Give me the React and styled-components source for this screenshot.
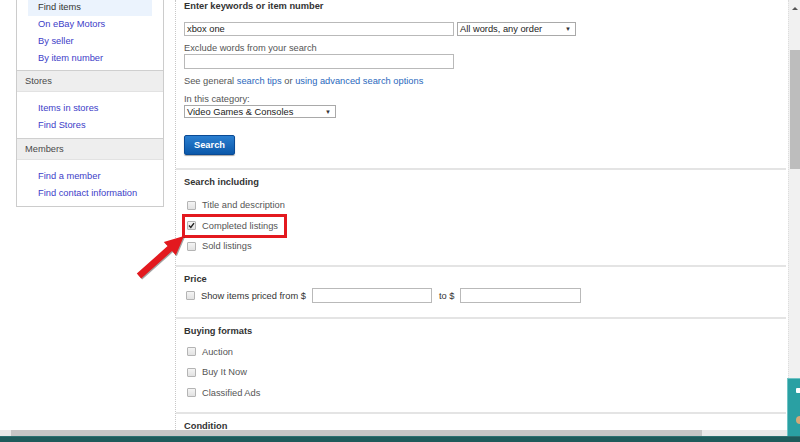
import React from "react";
import styled, { createGlobalStyle } from "styled-components";

const GlobalStyle = createGlobalStyle`
  html, body {
    margin: 0;
    padding: 0;
    background: #fff;
  }
  body {
    font-family: "Liberation Sans", Arial, sans-serif;
    font-size: 9.3px;
    color: #333;
  }
`;

const Screen = styled.div`
  position: relative;
  width: 800px;
  height: 442px;
  overflow: hidden;
  display: flex;
  flex-direction: column;
  background: #fff;
`;

const Viewport = styled.div`
  display: flex;
  height: 431px;
  overflow: hidden;
`;

const Page = styled.div`
  flex: 1;
  display: flex;
  align-items: stretch;
  padding: 0 2px 0 16px;
`;

/* ---------- sidebar ---------- */
const Sidebar = styled.nav`
  width: 146px;
  align-self: flex-start;
  margin-top: -1px;
  border: 1px solid #ccc;
  border-top: none;
`;

const NavList = styled.div`
  padding: ${({ first }) => (first ? "0 0 3px" : "8px 0 4px")};
`;

const NavItem = styled.a`
  display: block;
  height: 17px;
  line-height: 17px;
  margin: 0 11px;
  padding-left: 10px;
  color: ${({ active }) => (active ? "#333" : "#3d3dc8")};
  background: ${({ active }) => (active ? "#ebf3fd" : "transparent")};
  text-decoration: none;
`;

const NavHeader = styled.div`
  height: 20px;
  line-height: 20px;
  padding-left: 8px;
  background: #eeeeee;
  border-top: 1px solid #cfcfcf;
  border-bottom: 1px solid #e2e2e2;
  color: #4a4a4a;
`;

/* ---------- main column ---------- */
const Main = styled.main`
  flex: 1;
  margin-left: 11px;
  border-left: 1px dotted #c8c8c8;
`;

const Section = styled.section`
  padding: ${({ pad }) => pad || "5px 0 10px 8px"};
  border-top: ${({ first }) => (first ? "none" : "2px solid #e4e4e4")};
`;

const Title = styled.div`
  font-weight: bold;
  line-height: 14px;
  color: #333;
  margin-top: ${({ top }) => top || 0}px;
`;

const Label = styled.div`
  line-height: ${({ lh }) => lh || 12}px;
  margin-top: ${({ top }) => top || 0}px;
  color: #555;
`;

const Row = styled.div`
  display: flex;
  align-items: center;
  gap: ${({ gap }) => gap || 3}px;
  margin-top: ${({ top }) => top || 0}px;
`;

const PriceRow = styled(Row)`
  height: 16px;
  padding-left: 2px;

  span.to {
    margin-left: 1px;
  }
`;

const TextBox = styled.div`
  box-sizing: border-box;
  width: ${({ w }) => w}px;
  height: ${({ h }) => h || 15}px;
  line-height: ${({ h }) => (h || 15) - 2}px;
  padding-left: 2px;
  border: 1px solid #b9b9b9;
  background: #fff;
  color: #222;
`;

const Select = styled.div`
  box-sizing: border-box;
  width: ${({ w }) => w}px;
  height: ${({ h }) => h || 13}px;
  display: flex;
  align-items: center;
  justify-content: space-between;
  padding: 0 4px 0 2px;
  border: 1px solid #a9a9a9;
  background: #fff;
  color: #222;

  span.caret {
    font-size: 6px;
    color: #333;
  }
`;

const Link = styled.a`
  color: #2b68bd;
  text-decoration: none;
`;

const SearchButton = styled.button`
  display: block;
  width: 51px;
  height: 20px;
  margin-top: 17px;
  padding: 0;
  border: 1px solid #0a4a94;
  border-radius: 2px;
  background: linear-gradient(#2b7fd0, #0b58aa);
  box-shadow: 0 1px 1px rgba(0, 0, 0, 0.35);
  color: #fff;
  font-family: inherit;
  font-size: 9.3px;
  font-weight: bold;
`;

const CheckList = styled.div`
  margin-top: ${({ top }) => top || 0}px;
`;

const CheckRow = styled.div`
  display: flex;
  align-items: center;
  gap: 6px;
  height: 20.5px;
  padding-left: 3px;
  width: ${({ highlighted }) => (highlighted ? "fit-content" : "auto")};
  padding-right: ${({ highlighted }) => (highlighted ? "7px" : "0")};
  outline: ${({ highlighted }) => (highlighted ? "3px solid #e3191f" : "none")};
  outline-offset: -1px;
  color: #555;
`;

const Box = styled.span`
  box-sizing: border-box;
  width: 9px;
  height: 9px;
  border: 1px solid #b4b4b4;
  border-radius: 1px;
  background: linear-gradient(#f4f4f4, #e2e2e2);
  display: inline-flex;
  align-items: center;
  justify-content: center;
`;

/* ---------- chrome ---------- */
const VScroll = styled.div`
  width: 12px;
  position: relative;
  background: #f1f1f1;
  border-left: 1px dotted #dcdcdc;
  box-sizing: border-box;
  padding-top: 50px;

  &::before {
    content: "";
    position: absolute;
    top: 4px;
    left: 3px;
    border: 3px solid transparent;
    border-bottom: 3px solid #555;
  }
`;

const Thumb = styled.div`
  margin-left: 1px;
  width: 10px;
  height: 119px;
  background: #bdbdbd;
`;

const HScroll = styled.div`
  height: 6px;
  display: flex;
  background: #e9e9e9;
  padding-left: 11px;

  div {
    width: 691px;
    background: #c6c6c6;
  }
`;

const Taskbar = styled.div`
  height: 5px;
  background: #1e5b5b;
  border-top: 1px solid #2c7070;
`;

const Tray = styled.div`
  position: absolute;
  left: 787px;
  top: 378px;
  width: 13px;
  height: 58px;
  background: #2aa0a3;
  border-left: 1px solid #6fc3c4;
  border-top: 1px solid #6fc3c4;
  box-sizing: border-box;
`;

const Arrow = styled.svg`
  position: absolute;
  left: 130px;
  top: 225px;
  overflow: visible;
`;

const Check = ({ checked }) => (
  <Box>
    {checked && (
      <svg width="7" height="7" viewBox="0 0 7 7">
        <path d="M1 3.6 L2.8 5.4 L6 1.2" fill="none" stroke="#222" strokeWidth="1.4" />
      </svg>
    )}
  </Box>
);

const Caret = () => <span className="caret">▼</span>;

export default function App() {
  return (
    <Screen>
      <GlobalStyle />
      <Viewport>
        <Page>
          <Sidebar>
            <NavList first>
              <NavItem active>Find items</NavItem>
              <NavItem>On eBay Motors</NavItem>
              <NavItem>By seller</NavItem>
              <NavItem>By item number</NavItem>
            </NavList>
            <NavHeader>Stores</NavHeader>
            <NavList>
              <NavItem>Items in stores</NavItem>
              <NavItem>Find Stores</NavItem>
            </NavList>
            <NavHeader>Members</NavHeader>
            <NavList>
              <NavItem>Find a member</NavItem>
              <NavItem>Find contact information</NavItem>
            </NavList>
          </Sidebar>

          <Main>
            <Section first pad="0 0 13px 8px">
              <Title top={-1}>Enter keywords or item number</Title>
              <Row top={9}>
                <TextBox w={270} h={14}>xbox one</TextBox>
                <Select w={119} h={14}>
                  All words, any order <Caret />
                </Select>
              </Row>
              <Label top={6}>Exclude words from your search</Label>
              <TextBox w={270} />
              <Label top={5} lh={14}>
                See general <Link>search tips</Link> or <Link>using advanced search options</Link>
              </Label>
              <Label top={5}>In this category:</Label>
              <Select w={152}>
                Video Games &amp; Consoles <Caret />
              </Select>
              <SearchButton>Search</SearchButton>
            </Section>

            <Section pad="5px 0 8px 8px">
              <Title>Search including</Title>
              <CheckList top={6}>
                <CheckRow>
                  <Check /> Title and description
                </CheckRow>
                <CheckRow highlighted>
                  <Check checked /> Completed listings
                </CheckRow>
                <CheckRow>
                  <Check /> Sold listings
                </CheckRow>
              </CheckList>
            </Section>

            <Section pad="5px 0 13px 8px">
              <Title>Price</Title>
              <PriceRow top={2} gap={6}>
                <Check /> Show items priced from $
                <TextBox w={120} />
                <span className="to">to $</span>
                <TextBox w={121} />
              </PriceRow>
            </Section>

            <Section pad="5px 0 9px 8px">
              <Title>Buying formats</Title>
              <CheckList top={4}>
                <CheckRow>
                  <Check /> Auction
                </CheckRow>
                <CheckRow>
                  <Check /> Buy It Now
                </CheckRow>
                <CheckRow>
                  <Check /> Classified Ads
                </CheckRow>
              </CheckList>
            </Section>

            <Section>
              <Title>Condition</Title>
            </Section>
          </Main>
        </Page>
        <VScroll>
          <Thumb />
        </VScroll>
      </Viewport>
      <HScroll>
        <div />
      </HScroll>
      <Taskbar />

      <Arrow width="62" height="60" viewBox="0 0 62 60">
        <polygon
          points="55,12 46.8,31.3 43,27.1 12.2,54.5 7.8,49.5 38.6,22.1 34.8,17.9"
          fill="#333"
          opacity="0.45"
        />
        <polygon
          points="54,11 45.8,30.3 42,26.1 11.2,53.5 6.8,48.5 37.6,21.1 33.8,16.9"
          fill="#e3191f"
        />
      </Arrow>

      <Tray>
        <svg width="12" height="56" viewBox="0 0 12 56">
          <rect x="8" y="9" width="5" height="5" rx="1" fill="#fff" />
          <circle cx="12" cy="41" r="4" fill="#d6a877" />
        </svg>
      </Tray>
    </Screen>
  );
}
